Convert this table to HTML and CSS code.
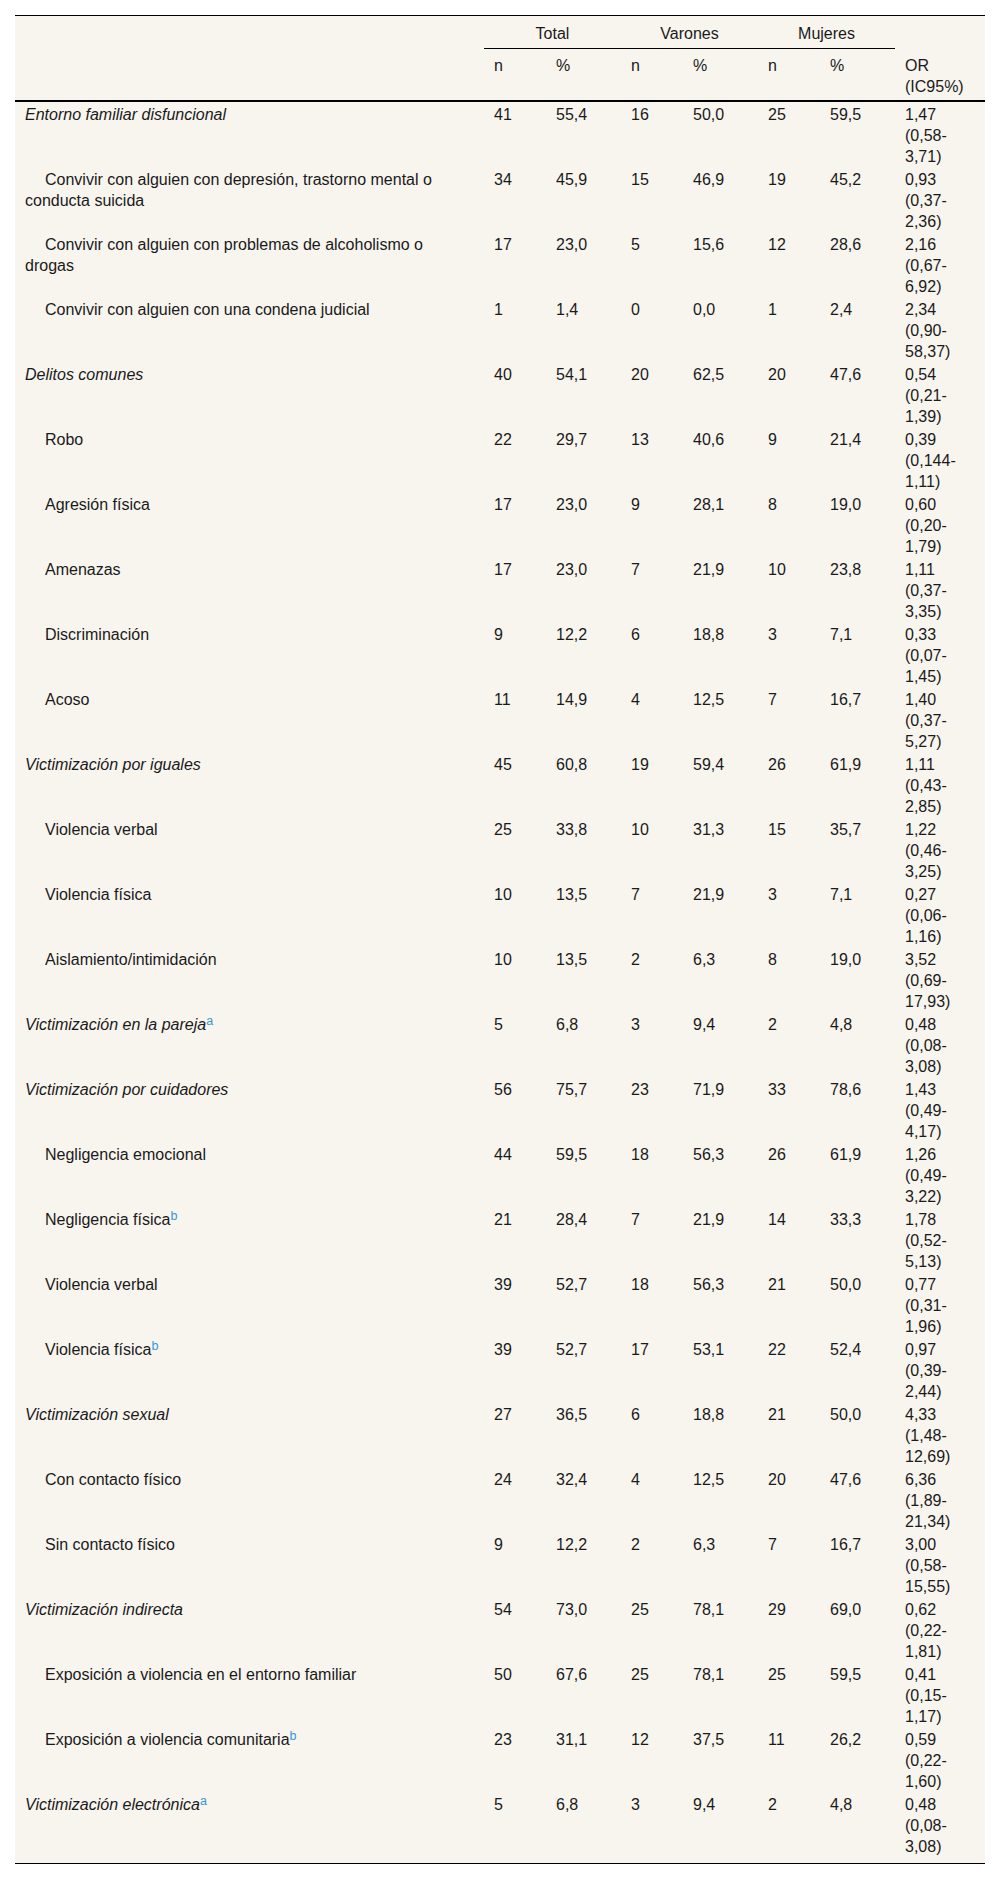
FILE: index.html
```html
<!DOCTYPE html>
<html lang="es">
<head>
<meta charset="utf-8">
<title>Tabla</title>
<link rel="stylesheet" href="styles.css">
</head>
<body>
<div class="page">
<table class="tbl">
<colgroup>
<col class="c-label"><col class="c-n"><col class="c-p"><col class="c-n"><col class="c-p"><col class="c-n"><col class="c-p"><col class="c-or">
</colgroup>
<thead>
<tr class="h1">
<th class="hlabel" rowspan="2"></th>
<th class="grp" colspan="2">Total</th>
<th class="grp" colspan="2">Varones</th>
<th class="grp" colspan="2">Mujeres</th>
<th></th>
</tr>
<tr class="h2">
<th>n</th><th>%</th><th>n</th><th>%</th><th>n</th><th>%</th><th>OR (IC95%)</th>
</tr>
</thead>
<tbody>
<tr><td class="main">Entorno familiar disfuncional</td><td>41</td><td>55,4</td><td>16</td><td>50,0</td><td>25</td><td>59,5</td><td>1,47 (0,58-<wbr>3,71)</td></tr>
<tr><td class="sub">Convivir con alguien con depresión, trastorno mental o conducta suicida</td><td>34</td><td>45,9</td><td>15</td><td>46,9</td><td>19</td><td>45,2</td><td>0,93 (0,37-<wbr>2,36)</td></tr>
<tr><td class="sub">Convivir con alguien con problemas de alcoholismo o drogas</td><td>17</td><td>23,0</td><td>5</td><td>15,6</td><td>12</td><td>28,6</td><td>2,16 (0,67-<wbr>6,92)</td></tr>
<tr><td class="sub">Convivir con alguien con una condena judicial</td><td>1</td><td>1,4</td><td>0</td><td>0,0</td><td>1</td><td>2,4</td><td>2,34 (0,90-<wbr>58,37)</td></tr>
<tr><td class="main">Delitos comunes</td><td>40</td><td>54,1</td><td>20</td><td>62,5</td><td>20</td><td>47,6</td><td>0,54 (0,21-<wbr>1,39)</td></tr>
<tr><td class="sub">Robo</td><td>22</td><td>29,7</td><td>13</td><td>40,6</td><td>9</td><td>21,4</td><td>0,39 (0,144-<wbr>1,11)</td></tr>
<tr><td class="sub">Agresión física</td><td>17</td><td>23,0</td><td>9</td><td>28,1</td><td>8</td><td>19,0</td><td>0,60 (0,20-<wbr>1,79)</td></tr>
<tr><td class="sub">Amenazas</td><td>17</td><td>23,0</td><td>7</td><td>21,9</td><td>10</td><td>23,8</td><td>1,11 (0,37-<wbr>3,35)</td></tr>
<tr><td class="sub">Discriminación</td><td>9</td><td>12,2</td><td>6</td><td>18,8</td><td>3</td><td>7,1</td><td>0,33 (0,07-<wbr>1,45)</td></tr>
<tr><td class="sub">Acoso</td><td>11</td><td>14,9</td><td>4</td><td>12,5</td><td>7</td><td>16,7</td><td>1,40 (0,37-<wbr>5,27)</td></tr>
<tr><td class="main">Victimización por iguales</td><td>45</td><td>60,8</td><td>19</td><td>59,4</td><td>26</td><td>61,9</td><td>1,11 (0,43-<wbr>2,85)</td></tr>
<tr><td class="sub">Violencia verbal</td><td>25</td><td>33,8</td><td>10</td><td>31,3</td><td>15</td><td>35,7</td><td>1,22 (0,46-<wbr>3,25)</td></tr>
<tr><td class="sub">Violencia física</td><td>10</td><td>13,5</td><td>7</td><td>21,9</td><td>3</td><td>7,1</td><td>0,27 (0,06-<wbr>1,16)</td></tr>
<tr><td class="sub">Aislamiento/intimidación</td><td>10</td><td>13,5</td><td>2</td><td>6,3</td><td>8</td><td>19,0</td><td>3,52 (0,69-<wbr>17,93)</td></tr>
<tr><td class="main">Victimización en la pareja<sup class="fn">a</sup></td><td>5</td><td>6,8</td><td>3</td><td>9,4</td><td>2</td><td>4,8</td><td>0,48 (0,08-<wbr>3,08)</td></tr>
<tr><td class="main">Victimización por cuidadores</td><td>56</td><td>75,7</td><td>23</td><td>71,9</td><td>33</td><td>78,6</td><td>1,43 (0,49-<wbr>4,17)</td></tr>
<tr><td class="sub">Negligencia emocional</td><td>44</td><td>59,5</td><td>18</td><td>56,3</td><td>26</td><td>61,9</td><td>1,26 (0,49-<wbr>3,22)</td></tr>
<tr><td class="sub">Negligencia física<sup class="fn">b</sup></td><td>21</td><td>28,4</td><td>7</td><td>21,9</td><td>14</td><td>33,3</td><td>1,78 (0,52-<wbr>5,13)</td></tr>
<tr><td class="sub">Violencia verbal</td><td>39</td><td>52,7</td><td>18</td><td>56,3</td><td>21</td><td>50,0</td><td>0,77 (0,31-<wbr>1,96)</td></tr>
<tr><td class="sub">Violencia física<sup class="fn">b</sup></td><td>39</td><td>52,7</td><td>17</td><td>53,1</td><td>22</td><td>52,4</td><td>0,97 (0,39-<wbr>2,44)</td></tr>
<tr><td class="main">Victimización sexual</td><td>27</td><td>36,5</td><td>6</td><td>18,8</td><td>21</td><td>50,0</td><td>4,33 (1,48-<wbr>12,69)</td></tr>
<tr><td class="sub">Con contacto físico</td><td>24</td><td>32,4</td><td>4</td><td>12,5</td><td>20</td><td>47,6</td><td>6,36 (1,89-<wbr>21,34)</td></tr>
<tr><td class="sub">Sin contacto físico</td><td>9</td><td>12,2</td><td>2</td><td>6,3</td><td>7</td><td>16,7</td><td>3,00 (0,58-<wbr>15,55)</td></tr>
<tr><td class="main">Victimización indirecta</td><td>54</td><td>73,0</td><td>25</td><td>78,1</td><td>29</td><td>69,0</td><td>0,62 (0,22-<wbr>1,81)</td></tr>
<tr><td class="sub">Exposición a violencia en el entorno familiar</td><td>50</td><td>67,6</td><td>25</td><td>78,1</td><td>25</td><td>59,5</td><td>0,41 (0,15-<wbr>1,17)</td></tr>
<tr><td class="sub">Exposición a violencia comunitaria<sup class="fn">b</sup></td><td>23</td><td>31,1</td><td>12</td><td>37,5</td><td>11</td><td>26,2</td><td>0,59 (0,22-<wbr>1,60)</td></tr>
<tr class="last"><td class="main">Victimización electrónica<sup class="fn">a</sup></td><td>5</td><td>6,8</td><td>3</td><td>9,4</td><td>2</td><td>4,8</td><td>0,48 (0,08-<wbr>3,08)</td></tr>
</tbody>
</table>
</div>
</body>
</html>
```
FILE: styles.css
```css
html, body {
  margin: 0;
  padding: 0;
  background: #ffffff;
}

body {
  font-family: "Liberation Sans", Arial, Helvetica, sans-serif;
  color: #1a1a1a;
}

.page {
  padding: 15px;
}

.tbl {
  width: 970px;
  table-layout: fixed;
  border-collapse: collapse;
  background: #f8f5ef;
  font-size: 16px;
  line-height: 21px;
  border-top: 1px solid #000;
  border-bottom: 1px solid #000;
}

.c-label { width: 469px; }
.c-n { width: 62px; }
.c-p { width: 75px; }
.c-or { width: 90px; }

.tbl th {
  font-weight: normal;
  text-align: left;
  vertical-align: top;
  padding: 7px 10px 4px;
}

.tbl .grp {
  text-align: center;
  border-bottom: 1px solid #000;
}

.tbl .h2 th {
  padding: 6px 10px 3px;
  border-bottom: 2px solid #000;
}

.tbl .hlabel {
  border-bottom: 2px solid #000;
}

.tbl td {
  vertical-align: top;
  text-align: left;
  padding: 2px 10px 0;
}

.tbl td.main {
  font-style: italic;
}

.tbl td.sub {
  text-indent: 20px;
}

.tbl tr.last td {
  padding-bottom: 6px;
}

.fn {
  font-style: normal;
  font-size: 12.5px;
  line-height: 0;
  vertical-align: 5px;
  color: #3497d9;
}
```
